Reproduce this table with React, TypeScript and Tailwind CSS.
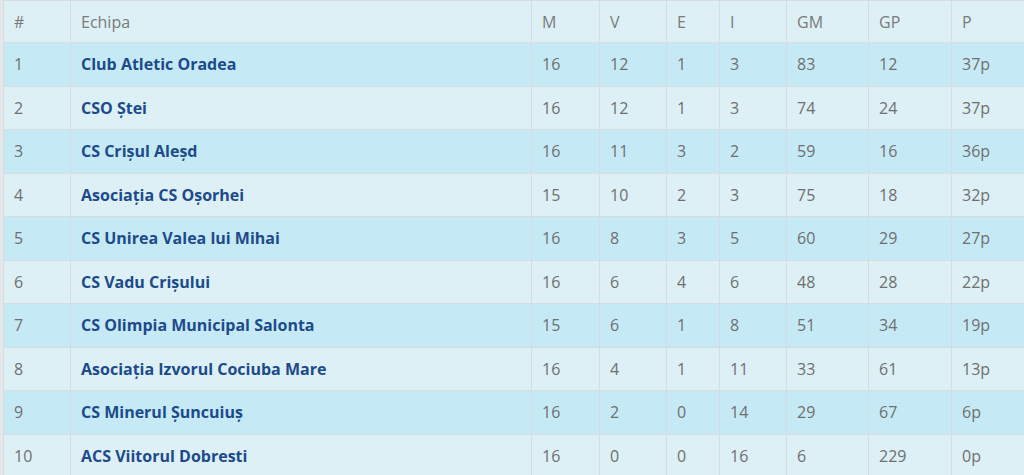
const rows = [
  ["1", "Club Atletic Oradea", "16", "12", "1", "3", "83", "12", "37p"],
  ["2", "CSO Ștei", "16", "12", "1", "3", "74", "24", "37p"],
  ["3", "CS Crișul Aleșd", "16", "11", "3", "2", "59", "16", "36p"],
  ["4", "Asociația CS Oșorhei", "15", "10", "2", "3", "75", "18", "32p"],
  ["5", "CS Unirea Valea lui Mihai", "16", "8", "3", "5", "60", "29", "27p"],
  ["6", "CS Vadu Crișului", "16", "6", "4", "6", "48", "28", "22p"],
  ["7", "CS Olimpia Municipal Salonta", "15", "6", "1", "8", "51", "34", "19p"],
  ["8", "Asociația Izvorul Cociuba Mare", "16", "4", "1", "11", "33", "61", "13p"],
  ["9", "CS Minerul Șuncuiuș", "16", "2", "0", "14", "29", "67", "6p"],
  ["10", "ACS Viitorul Dobresti", "16", "0", "0", "16", "6", "229", "0p"],
];

const headers = ["#", "Echipa", "M", "V", "E", "I", "GM", "GP", "P"];
const widths = ["w-[67px]", "w-[461px]", "w-[68px]", "w-[67px]", "w-[53px]", "w-[67px]", "w-[82px]", "w-[83px]", "w-[73px]"];

export default function App() {
  return (
    <div className="h-[475px] w-[1024px] overflow-hidden bg-[#e4e8ea] pl-[3px] font-['Open_Sans',sans-serif] text-[16px]">
      <table className="w-[1021px] table-fixed border-collapse">
        <thead>
          <tr className="h-[42px] bg-[#dcf0f6]">
            {headers.map((h, i) => (
              <th
                key={h}
                className={`${widths[i]} border border-[#d6dde0] pl-[10px] text-left font-normal text-[#7a7a7a]`}
              >
                {h}
              </th>
            ))}
          </tr>
        </thead>
        <tbody>
          {rows.map((r, ri) => (
            <tr key={r[0]} className={`h-[43.5px] ${ri % 2 === 0 ? "bg-[#c5eaf5]" : "bg-[#dcf0f6]"}`}>
              {r.map((c, ci) => (
                <td
                  key={ci}
                  className={
                    ci === 1
                      ? "border border-[#d6dde0] pl-[10px] font-bold text-[#1d4a8a]"
                      : "border border-[#d6dde0] pl-[10px] text-[#6f6f6f]"
                  }
                >
                  {c}
                </td>
              ))}
            </tr>
          ))}
        </tbody>
      </table>
    </div>
  );
}
